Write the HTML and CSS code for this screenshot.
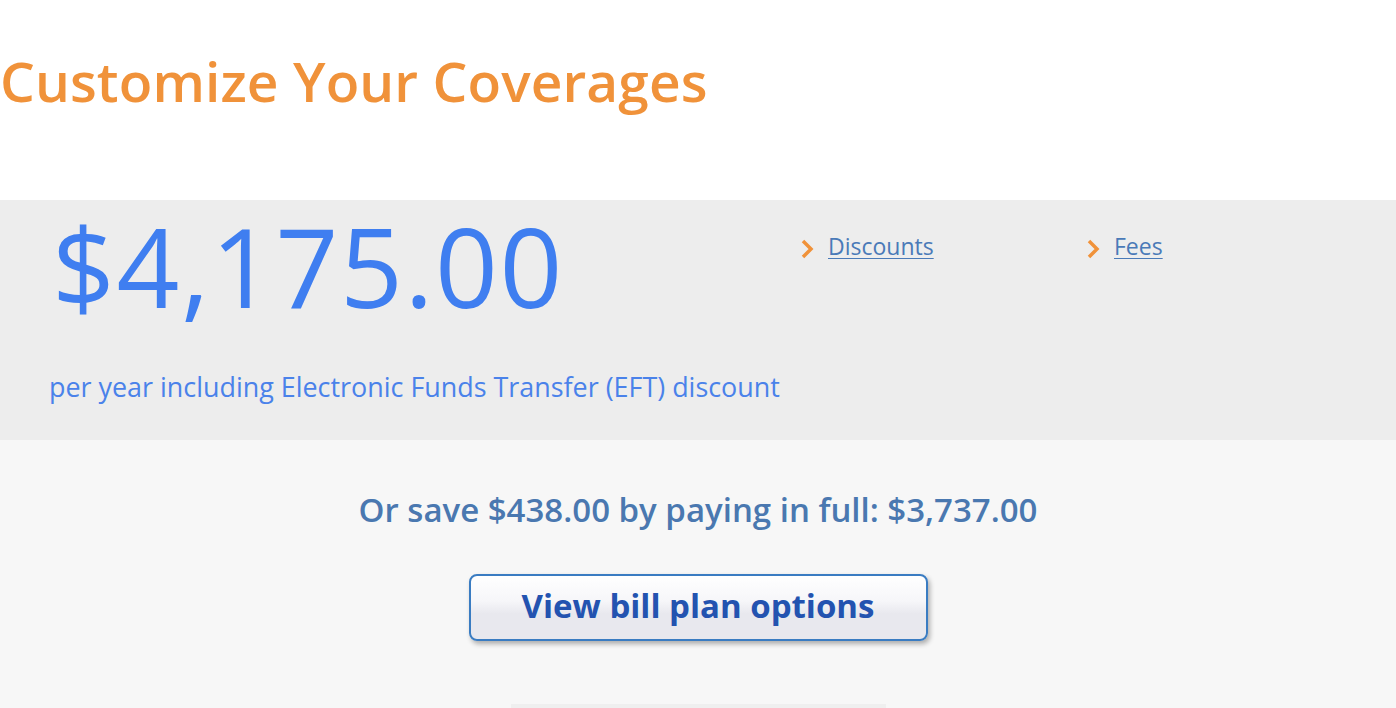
FILE: index.html
```html
<!DOCTYPE html>
<html>
<head>
<meta charset="utf-8">
<link rel="stylesheet" href="styles.css">
</head>
<body>
<header class="head">
  <h1 class="title">Customize Your Coverages</h1>
</header>
<section class="band">
  <div class="price-col">
    <div class="price">$4,175.00</div>
    <div class="per">per year including Electronic Funds Transfer (EFT) discount</div>
  </div>
  <div class="links">
    <a class="link link-discounts" href="#"><svg class="chev" width="14" height="20" viewBox="0 0 14 20"><path d="M3 2 L11 10 L3 18" fill="none" stroke="#f0923a" stroke-width="3.5"/></svg><span>Discounts</span></a>
    <a class="link" href="#"><svg class="chev" width="14" height="20" viewBox="0 0 14 20"><path d="M3 2 L11 10 L3 18" fill="none" stroke="#f0923a" stroke-width="3.5"/></svg><span>Fees</span></a>
  </div>
</section>
<section class="lower">
  <p class="save">Or save $438.00 by paying in full: $3,737.00</p>
  <button class="btn">View bill plan options</button>
  <div class="next"></div>
</section>
</body>
</html>
```
FILE: styles.css
```css
html, body {
  margin: 0;
  padding: 0;
  background: #f7f7f7;
  font-family: "Open Sans", "Noto Sans", sans-serif;
  overflow: hidden;
}
.head {
  background: #ffffff;
  height: 200px;
  box-sizing: border-box;
  padding-top: 43px;
}
.title {
  margin: 0;
  font-size: 55px;
  font-weight: 600;
  color: #f0923a;
  line-height: 76px;
  letter-spacing: 0.1px;
}
.band {
  background: #ededed;
  height: 240px;
  display: flex;
  box-sizing: border-box;
}
.price-col {
  width: 786px;
  padding-left: 49px;
  box-sizing: border-box;
}
.price {
  font-size: 110px;
  font-weight: 400;
  color: #3f7ef0;
  line-height: 120px;
  margin-top: 5px;
  margin-left: 3px;
  letter-spacing: 1.6px;
}
.per {
  font-size: 26.9px;
  color: #4a82ea;
  margin-top: 44px;
  line-height: 36px;
  white-space: nowrap;
}
.links {
  display: flex;
  padding-top: 29px;
}
.link {
  display: flex;
  align-items: center;
  gap: 14px;
  height: 34px;
  color: #4a7ab8;
  font-size: 23px;
  text-decoration: underline;
  text-underline-offset: 3px;
  text-decoration-thickness: 1px;
}
.link-discounts {
  width: 286px;
  margin-left: 14px;
}
.chev { margin-top: 6px; }
.lower {
  display: flex;
  flex-direction: column;
  align-items: center;
  height: 268px;
  box-sizing: border-box;
  padding-top: 47px;
}
.save {
  margin: 0;
  font-size: 33px;
  font-weight: 600;
  color: #4a78b0;
  line-height: 46px;
}
.btn {
  margin-top: 41px;
  width: 459px;
  height: 69px;
  border: 2px solid #3a7cc2;
  border-radius: 8px;
  background: linear-gradient(#ffffff 0%, #f6f6f9 40%, #e8e8ee 60%, #e8e8ee 100%);
  box-shadow: 2px 3px 5px rgba(0,0,0,0.3);
  font-family: "Open Sans", "Noto Sans", sans-serif;
  font-size: 33px;
  font-weight: 700;
  color: #2353b0;
  padding: 0 0 5px 0;
}
.next {
  margin-top: 63px;
  width: 375px;
  height: 4px;
  background: #efefef;
}
```
